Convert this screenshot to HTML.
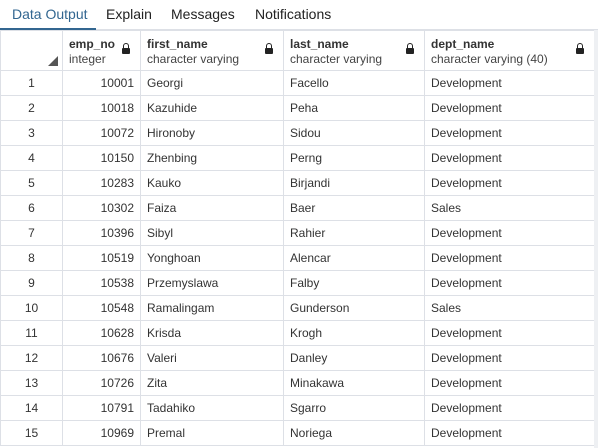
<!DOCTYPE html>
<html><head><meta charset="utf-8"><style>
*{margin:0;padding:0;box-sizing:border-box}
body{width:598px;height:448px;background:#fff;font-family:"Liberation Sans",sans-serif;position:relative;overflow:hidden;color:#333}
.tabs{position:absolute;left:0;top:0;width:598px;height:30px;border-bottom:1px solid #dde0e6}
.tab{position:absolute;top:6px;font-size:14px;color:#222}
.ul{position:absolute;left:0;top:28px;width:96px;height:3px;background:#326690}
table{position:absolute;left:0;top:30px;border-collapse:collapse;table-layout:fixed;font-size:12px}
td,th{border:1px solid #dde0e6;height:25px;padding:0 6px;white-space:nowrap;overflow:hidden}
th{height:40px;text-align:left;font-weight:normal;vertical-align:top;padding-top:6px;position:relative;line-height:15px}
th b{font-weight:bold;color:#333}
th span{color:#444}
td.n{text-align:center}
td.r{text-align:right}
.lock{position:absolute;right:10px;top:17px;width:8px;height:6px;background:#222;border-radius:1px}
.lock:before{content:"";position:absolute;left:1px;top:-5px;width:4px;height:5px;border:1.5px solid #222;border-bottom:none;border-radius:3px 3px 0 0;box-sizing:content-box;margin-left:-0.5px}
.corner{position:absolute;right:4px;bottom:4px;width:0;height:0;border-left:10px solid transparent;border-bottom:10px solid #555}
.side{position:absolute;left:594px;top:30px;width:4px;height:418px;background:#eef0f3}
</style></head><body>
<div class="tabs">
<div class="tab" style="left:12px;color:#326690">Data Output</div>
<div class="tab" style="left:106px">Explain</div>
<div class="tab" style="left:171px">Messages</div>
<div class="tab" style="left:255px">Notifications</div>
<div class="ul"></div>
</div>
<table>
<colgroup><col style="width:62px"><col style="width:78px"><col style="width:143px"><col style="width:141px"><col style="width:170px"></colgroup>
<tr><th><div class="corner"></div></th>
<th><b>emp_no</b><br><span>integer</span><div class="lock"></div></th>
<th><b>first_name</b><br><span>character varying</span><div class="lock"></div></th>
<th><b>last_name</b><br><span>character varying</span><div class="lock"></div></th>
<th><b>dept_name</b><br><span>character varying (40)</span><div class="lock"></div></th></tr>
<tr><td class="n">1</td><td class="r">10001</td><td>Georgi</td><td>Facello</td><td>Development</td></tr>
<tr><td class="n">2</td><td class="r">10018</td><td>Kazuhide</td><td>Peha</td><td>Development</td></tr>
<tr><td class="n">3</td><td class="r">10072</td><td>Hironoby</td><td>Sidou</td><td>Development</td></tr>
<tr><td class="n">4</td><td class="r">10150</td><td>Zhenbing</td><td>Perng</td><td>Development</td></tr>
<tr><td class="n">5</td><td class="r">10283</td><td>Kauko</td><td>Birjandi</td><td>Development</td></tr>
<tr><td class="n">6</td><td class="r">10302</td><td>Faiza</td><td>Baer</td><td>Sales</td></tr>
<tr><td class="n">7</td><td class="r">10396</td><td>Sibyl</td><td>Rahier</td><td>Development</td></tr>
<tr><td class="n">8</td><td class="r">10519</td><td>Yonghoan</td><td>Alencar</td><td>Development</td></tr>
<tr><td class="n">9</td><td class="r">10538</td><td>Przemyslawa</td><td>Falby</td><td>Development</td></tr>
<tr><td class="n">10</td><td class="r">10548</td><td>Ramalingam</td><td>Gunderson</td><td>Sales</td></tr>
<tr><td class="n">11</td><td class="r">10628</td><td>Krisda</td><td>Krogh</td><td>Development</td></tr>
<tr><td class="n">12</td><td class="r">10676</td><td>Valeri</td><td>Danley</td><td>Development</td></tr>
<tr><td class="n">13</td><td class="r">10726</td><td>Zita</td><td>Minakawa</td><td>Development</td></tr>
<tr><td class="n">14</td><td class="r">10791</td><td>Tadahiko</td><td>Sgarro</td><td>Development</td></tr>
<tr><td class="n">15</td><td class="r">10969</td><td>Premal</td><td>Noriega</td><td>Development</td></tr>
</table>
<div class="side"></div>
</body></html>
